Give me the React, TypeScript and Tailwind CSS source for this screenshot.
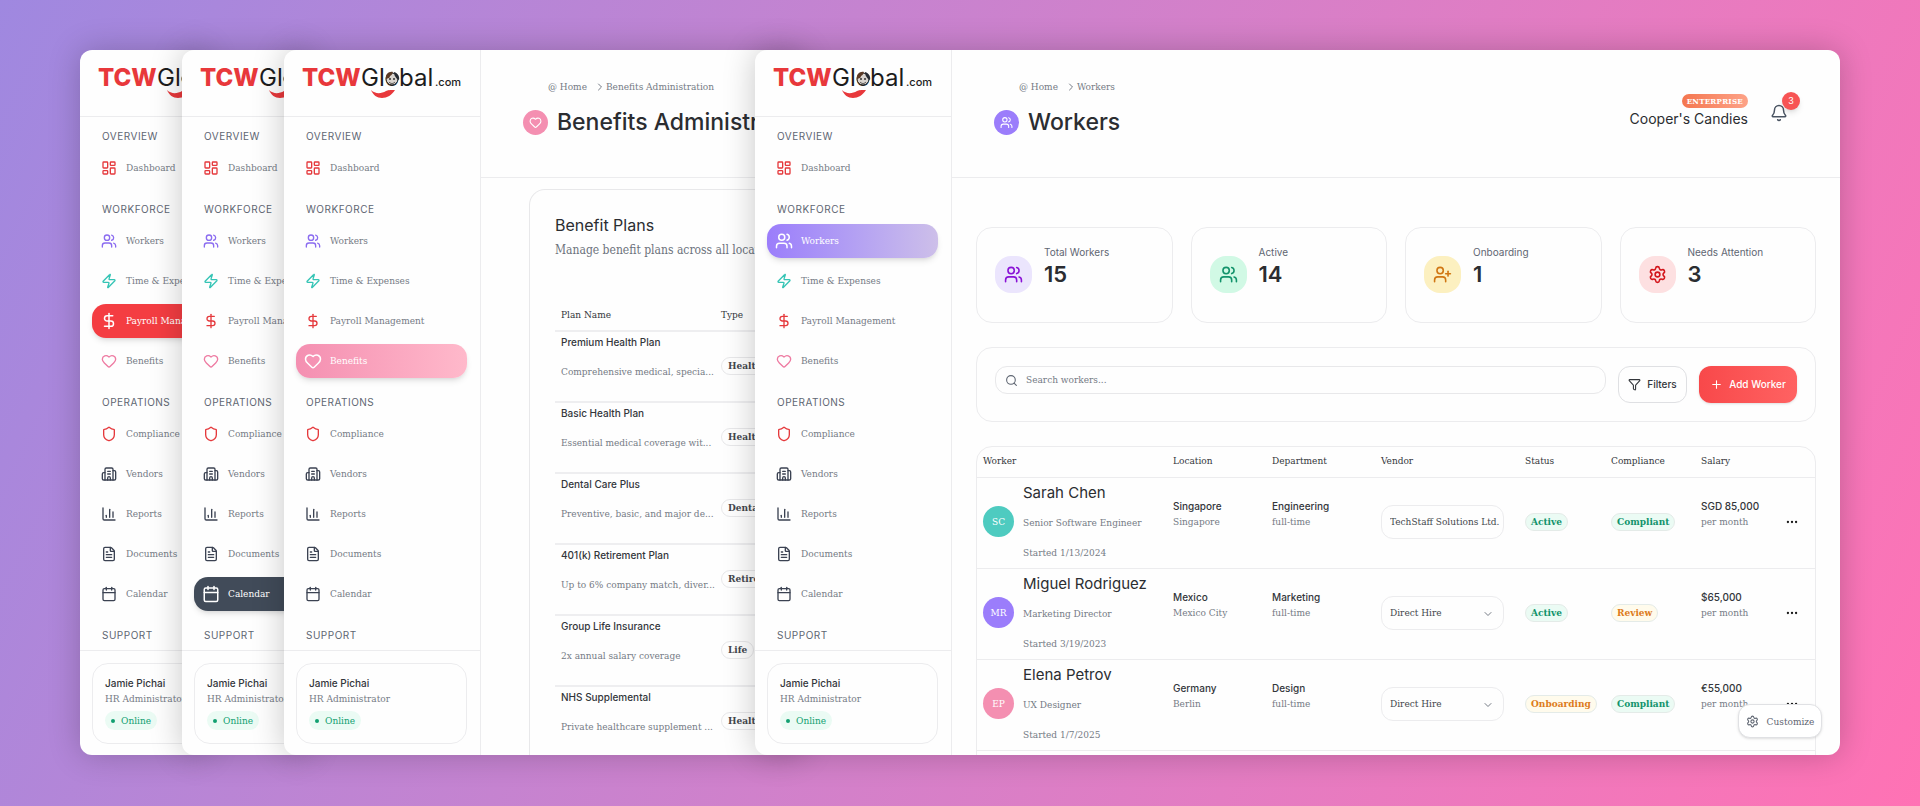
import { ReactNode } from 'react';
import {
  Bell, Building2, Calendar, ChartColumn, ChevronDown, ChevronRight, DollarSign, Ellipsis, FileText,
  Funnel, Heart, LayoutDashboard, LucideIcon, Plus, Search, Settings, Shield, UserPlus, Users, Zap,
} from 'lucide-react';

type NavItem = { name: string; icon: LucideIcon; color: string };

const sections: { title: string; items: NavItem[] }[] = [
  { title: 'OVERVIEW', items: [{ name: 'Dashboard', icon: LayoutDashboard, color: 'text-[#e5393c]' }] },
  {
    title: 'WORKFORCE',
    items: [
      { name: 'Workers', icon: Users, color: 'text-[#8b6cf0]' },
      { name: 'Time & Expenses', icon: Zap, color: 'text-[#35c4b5]' },
      { name: 'Payroll Management', icon: DollarSign, color: 'text-[#e5393c]' },
      { name: 'Benefits', icon: Heart, color: 'text-[#ee7ba2]' },
    ],
  },
  {
    title: 'OPERATIONS',
    items: [
      { name: 'Compliance', icon: Shield, color: 'text-[#e5393c]' },
      { name: 'Vendors', icon: Building2, color: 'text-[#3b4252]' },
      { name: 'Reports', icon: ChartColumn, color: 'text-[#3b4252]' },
      { name: 'Documents', icon: FileText, color: 'text-[#3b4252]' },
      { name: 'Calendar', icon: Calendar, color: 'text-[#3b4252]' },
    ],
  },
  { title: 'SUPPORT', items: [] },
];

const activeBg: Record<string, string> = {
  'Payroll Management': 'bg-[#f43d42]',
  Calendar: 'bg-[#414b59]',
  Benefits: 'bg-linear-to-r from-[#f48fb1] to-[#ffb9cb]',
  Workers: 'bg-linear-to-r from-[#9b7dfb] to-[#cdbfe9]',
};

const plans = [
  { name: 'Premium Health Plan', desc: 'Comprehensive medical, specia...', type: 'Health' },
  { name: 'Basic Health Plan', desc: 'Essential medical coverage wit...', type: 'Health' },
  { name: 'Dental Care Plus', desc: 'Preventive, basic, and major de...', type: 'Dental' },
  { name: '401(k) Retirement Plan', desc: 'Up to 6% company match, diver...', type: 'Retirement' },
  { name: 'Group Life Insurance', desc: '2x annual salary coverage', type: 'Life' },
  { name: 'NHS Supplemental', desc: 'Private healthcare supplement ...', type: 'Health' },
];

const stats = [
  { label: 'Total Workers', value: 15, icon: Users, tone: 'bg-[#ebe5fd] text-[#8a12d6]' },
  { label: 'Active', value: 14, icon: Users, tone: 'bg-[#d1f9e5] text-[#12936b]' },
  { label: 'Onboarding', value: 1, icon: UserPlus, tone: 'bg-[#fcf0c0] text-[#d07612]' },
  { label: 'Needs Attention', value: 3, icon: Settings, tone: 'bg-[#fde0e1] text-[#d3161c]' },
];

const workers = [
  { name: 'Sarah Chen', initials: 'SC', avatar: 'bg-[#4ecbc0]', role: 'Senior Software Engineer', started: '1/13/2024', country: 'Singapore', city: 'Singapore', dept: 'Engineering', vendor: 'TechStaff Solutions Ltd.', status: 'Active', compliance: 'Compliant', salary: 'SGD 85,000' },
  { name: 'Miguel Rodriguez', initials: 'MR', avatar: 'bg-[#9b7dfb]', role: 'Marketing Director', started: '3/19/2023', country: 'Mexico', city: 'Mexico City', dept: 'Marketing', vendor: 'Direct Hire', status: 'Active', compliance: 'Review', salary: '$65,000' },
  { name: 'Elena Petrov', initials: 'EP', avatar: 'bg-[#f48fb1]', role: 'UX Designer', started: '1/7/2025', country: 'Germany', city: 'Berlin', dept: 'Design', vendor: 'Direct Hire', status: 'Onboarding', compliance: 'Compliant', salary: '€55,000' },
];

const sans = 'font-[family-name:Inter,sans-serif]';

function Logo() {
  return (
    <svg width="162" height="36" viewBox="0 0 162 36" className={sans} role="img" aria-label="TCWGlobal.com">
      <text x="0" y="20" fontSize="24" fontWeight="800" fill="#e8383b">TCW</text>
      <text x="59" y="20" fontSize="24" fill="#1c1c1c">Global</text>
      <text x="133" y="20" fontSize="11" fontWeight="500" fill="#1c1c1c">.com</text>
      {/* little globe face in the "o" */}
      <circle cx="90" cy="13" r="6" fill="#d9d4cf" stroke="#222" strokeWidth="1" />
      <path d="M84 13c-1-5 3-8 7-7-1 2-1 3-3 4 0 2-2 2-4 3z" fill="#5b3a26" />
      <path d="M92 6c4 1 6 5 5 8l-2-1c-1-2-3-3-3-7z" fill="#262b33" />
      <path d="M87 16c2 2 4 2 6 0" fill="none" stroke="#4d4a48" strokeWidth="1" />
      <circle cx="88" cy="13" r="1" fill="#333" />
      <circle cx="92" cy="13" r="1" fill="#333" />
      <path d="M69 24c4 4 10 4 15 1 2-1 3-1 9-1-3 5-8 8-13 8-5 0-9-3-11-8z" fill="#e8383b" />
    </svg>
  );
}

function Sidebar({ active }: { active: string }) {
  return (
    <aside className="w-[197px] shrink-0 flex flex-col border-r border-[#ececee]">
      <div className="h-[67px] shrink-0 pl-[18px] pt-4 border-b border-[#ececee]">
        <Logo />
      </div>
      <nav className="flex-1 min-h-0 overflow-hidden pl-3 pr-[13px] pt-[11px] flex flex-col gap-4">
        {sections.map((s) => (
          <div key={s.title} className="shrink-0">
            <h3 className={`${sans} text-[10px] leading-4 tracking-wider text-[#5f6672] pl-2.5 mb-[7px]`}>{s.title}</h3>
            <div className="flex flex-col gap-1.5">
              {s.items.map(({ name, icon: Icon, color }) => {
                const on = name === active;
                return (
                  <a key={name} href="#"
                    className={`h-[34px] pl-2 flex items-center gap-2 rounded-[14px] whitespace-nowrap text-[10px] leading-4 ${on ? `${activeBg[name]} text-white shadow-md` : 'text-[#757b85]'}`}>
                    <span className="w-[18px] flex justify-center">
                      <Icon size={on ? 18 : 16} className={on ? 'text-white' : color} />
                    </span>
                    <span className="pb-px">{name}</span>
                  </a>
                );
              })}
            </div>
          </div>
        ))}
      </nav>
      <div className="border-t border-[#ececee] pl-3 pr-[13px] pt-3 pb-[11px]">
        <div className="h-[81px] rounded-2xl border border-[#ececee] pl-3 pt-3">
          <p className={`${sans} text-[10px] leading-[15px] font-medium text-[#33363b]`}>Jamie Pichai</p>
          <p className="text-[10px] leading-4 text-[#757b85]">HR Administrator</p>
          <span className="mt-1 h-[19px] w-fit px-1.5 flex items-center gap-1.5 rounded-full bg-[#ebfbf4] text-[10px] text-[#12a071]">
            <span className="size-1 rounded-full bg-[#12a071]"></span>Online
          </span>
        </div>
      </div>
    </aside>
  );
}

function PageHeader({ title, icon: Icon, tone, children }: { title: string; icon: LucideIcon; tone: string; children?: ReactNode }) {
  return (
    <header className="h-32 shrink-0 border-b border-[#ececee] pl-[42px] pr-10 flex justify-between">
      <div className="pt-7">
        <div className="pl-[25px] flex items-center text-[10px] leading-[18px] text-[#757b85] whitespace-nowrap">
          <a href="#">@ Home</a>
          <ChevronRight size={12} className="ml-[7px]" strokeWidth={2} />
          <span>{title}</span>
        </div>
        <div className="mt-[11px] flex items-center gap-[9px]">
          <span className={`size-[25px] rounded-full flex items-center justify-center text-white ${tone}`}>
            <Icon size={13} />
          </span>
          <h1 className={`${sans} text-[23px] leading-[30px] font-medium text-[#2b2d31] whitespace-nowrap`}>{title}</h1>
        </div>
      </div>
      {children}
    </header>
  );
}

function Pill({ text }: { text: string }) {
  const amber = text === 'Review' || text === 'Onboarding';
  return (
    <span className={`inline-flex items-center h-[18px] px-[5px] rounded-full border border-[#e4ebe8] text-[10px] font-bold ${amber ? 'bg-[#fffbec] text-[#dd7c1c]' : 'bg-[#ebfbf4] text-[#12936b]'}`}>{text}</span>
  );
}

function Benefits() {
  return (
    <div className="flex-1 min-w-0 flex flex-col">
      <PageHeader title="Benefits Administration" icon={Heart} tone="bg-[#f48fb1]" />
      <div className="mt-[11px] ml-12 w-[800px] flex-1 border border-b-0 border-[#e8e8ea] rounded-t-2xl pt-[23px] px-[25px] whitespace-nowrap">
        <h2 className={`${sans} text-base leading-6 text-[#2b2d31]`}>Benefit Plans</h2>
        <p className="text-xs leading-[26px] text-[#6c727c]">Manage benefit plans across all locations</p>
        <table className="mt-9 w-full table-fixed text-left text-[10px]">
          <thead>
            <tr className="h-8 border-b-2 border-[#eeeef0] text-[#33363b]">
              <th className="w-[160px] pl-1.5 font-medium">Plan Name</th>
              <th className="pl-1.5 font-medium">Type</th>
            </tr>
          </thead>
          <tbody>
            {plans.map((p) => (
              <tr key={p.name} className="h-[71px] border-b-2 border-[#eeeef0]">
                <td className="pl-1.5 pb-5">
                  <p className={`${sans} leading-4 font-medium text-[#33363b]`}>{p.name}</p>
                  <p className="mt-3.5 leading-4 text-[#757b85]">{p.desc}</p>
                </td>
                <td className="pl-1.5 pb-0.5">
                  <span className="inline-flex items-center h-[18px] px-1.5 rounded-full border border-[#e8e8ea] font-bold text-[#44474d]">{p.type}</span>
                </td>
              </tr>
            ))}
          </tbody>
        </table>
      </div>
    </div>
  );
}

function Workers() {
  return (
    <div className="relative flex-1 min-w-0 flex flex-col">
      <PageHeader title="Workers" icon={Users} tone="bg-[#9b7dfb]">
        <div className="flex gap-5 pt-11">
          <div className="flex flex-col items-end">
            <span className="h-3.5 px-[5px] flex items-center rounded-full bg-linear-to-r from-[#f4764f] to-[#fda287] text-[8px] font-bold tracking-wide text-white">ENTERPRISE</span>
            <span className={`${sans} mt-px text-sm leading-5 text-[#2b2d31]`}>Cooper's Candies</span>
          </div>
          <button aria-label="Notifications" className="relative h-[38px] w-8 pl-0.5 flex items-center justify-start text-[#4a5462]">
            <Bell size={18} />
            <span className={`${sans} absolute right-0 -top-0.5 size-[18px] rounded-full bg-[#f75454] text-[9px] text-white flex items-center justify-center shadow-md`}>3</span>
          </button>
        </div>
      </PageHeader>

      <main className="flex-1 min-h-0 overflow-hidden px-6 pt-[49px] flex flex-col gap-6">
        <section className="grid grid-cols-4 gap-[18px] shrink-0">
          {stats.map(({ label, value, icon: Icon, tone }) => (
            <div key={label} className="h-24 rounded-2xl border border-[#ececee] pl-[18px] flex gap-3">
              <span className={`mt-7 size-[37px] rounded-2xl flex items-center justify-center ${tone}`}><Icon size={19} /></span>
              <div className={`${sans} pt-4`}>
                <p className="text-[10px] leading-4 text-[#5f6672]">{label}</p>
                <p className="text-[22px] leading-7 font-semibold text-[#2b2d31]">{value}</p>
              </div>
            </div>
          ))}
        </section>

        <section className={`${sans} h-[75px] shrink-0 rounded-2xl border border-[#ececee] px-[18px] pt-[18px] flex items-start gap-3`}>
          <label className="flex-1 h-7 pl-[9px] rounded-xl border border-[#e8e8ea] flex items-center gap-2 text-[#5f6672]">
            <Search size={13} />
            <input aria-label="Search workers" placeholder="Search workers..." className="flex-1 outline-none pb-0.5 font-[family-name:DejaVu_Serif_Condensed,DejaVu_Serif,serif] text-[10px] placeholder:text-[#757b85]" />
          </label>
          <button className="h-[37px] w-[69px] flex items-center justify-center gap-1.5 rounded-xl border border-[#dfe0e3] text-[10px] font-medium text-[#33363b]"><Funnel size={13} />Filters</button>
          <button className="h-[37px] w-[98px] flex items-center justify-center gap-1.5 rounded-xl bg-linear-to-r from-[#f8484a] to-[#ff6262] text-[10px] font-medium text-white shadow-sm"><Plus size={13} />Add Worker</button>
        </section>

        <section className="shrink-0 rounded-t-2xl border border-[#ececee]">
          <table className="w-full table-fixed text-left text-[10px] whitespace-nowrap">
            <thead>
              <tr className="h-[30px] border-b border-[#ececee] text-[#33363b] [&>th]:pl-1.5 [&>th]:pb-0.5 [&>th]:font-medium">
                <th className="w-[190px]">Worker</th>
                <th className="w-[99px]">Location</th>
                <th className="w-[109px]">Department</th>
                <th className="w-[144px]">Vendor</th>
                <th className="w-[86px]">Status</th>
                <th className="w-[90px]">Compliance</th>
                <th className="w-[82px]">Salary</th>
                <th></th>
              </tr>
            </thead>
            <tbody>
              {workers.map((w) => (
                <tr key={w.name} className="h-[91px] border-b border-[#ececee] text-[#757b85] [&>td]:pl-1.5 [&>td]:pb-0.5">
                  <td>
                    <div className="flex items-center gap-[9px]">
                      <span className={`size-[31px] rounded-full flex items-center justify-center text-white ${w.avatar}`}>{w.initials}</span>
                      <div>
                        <p className={`${sans} text-[15px] leading-5 text-[#2b2d31]`}>{w.name}</p>
                        <p className="mt-3 leading-4">{w.role}</p>
                        <p className="mt-3.5 leading-4">Started {w.started}</p>
                      </div>
                    </div>
                  </td>
                  <td><p className={`${sans} leading-4 font-medium text-[#33363b]`}>{w.country}</p><p className="leading-4 mb-4">{w.city}</p></td>
                  <td><p className={`${sans} leading-4 font-medium text-[#33363b]`}>{w.dept}</p><p className="leading-4 mb-4">full-time</p></td>
                  <td>
                    <div className="relative w-[123px]">
                      <select aria-label={`Vendor for ${w.name}`} className="appearance-none h-[34px] w-full pl-2 rounded-xl border border-[#ececee] text-[#44474d]">
                        <option>{w.vendor}</option>
                      </select>
                      {w.vendor === 'Direct Hire' && <ChevronDown size={12} className="absolute right-2.5 top-3 pointer-events-none" />}
                    </div>
                  </td>
                  <td><Pill text={w.status} /></td>
                  <td><Pill text={w.compliance} /></td>
                  <td><p className={`${sans} leading-4 font-medium text-[#33363b]`}>{w.salary}</p><p className="leading-4 mb-4">per month</p></td>
                  <td><button aria-label="More" className="ml-0.5 align-middle text-[#1c1c1c]"><Ellipsis size={14} /></button></td>
                </tr>
              ))}
              <tr className="h-10"><td colSpan={8}></td></tr>
            </tbody>
          </table>
        </section>
      </main>

      <button className="absolute right-[18px] bottom-[17px] h-[34px] w-[84px] flex items-center justify-center gap-2 rounded-xl border border-[#e0e1e4] bg-white text-[10px] text-[#5f6672] shadow-sm">
        <Settings size={13} />Customize
      </button>
    </div>
  );
}

const frame = 'flex rounded-xl bg-[#fefefe] overflow-hidden shadow-[0_0_32px_rgba(0,0,0,0.22)]';

export default function App() {
  return (
    <div className="h-screen overflow-hidden px-20 pt-[50px] pb-[51px] flex bg-linear-115 from-[#9f88e0] to-[#ff72b4] font-[family-name:DejaVu_Serif_Condensed,DejaVu_Serif,serif]">
      <div className={`${frame} w-32 -mr-[26px] shrink-0`}><Sidebar active="Payroll Management" /></div>
      <div className={`${frame} w-32 -mr-[26px] shrink-0`}><Sidebar active="Calendar" /></div>
      <div className={`${frame} w-[520px] -mr-[49px] shrink-0`}>
        <Sidebar active="Benefits" />
        <Benefits />
      </div>
      <div className={`${frame} flex-1 min-w-0`}>
        <Sidebar active="Workers" />
        <Workers />
      </div>
    </div>
  );
}
